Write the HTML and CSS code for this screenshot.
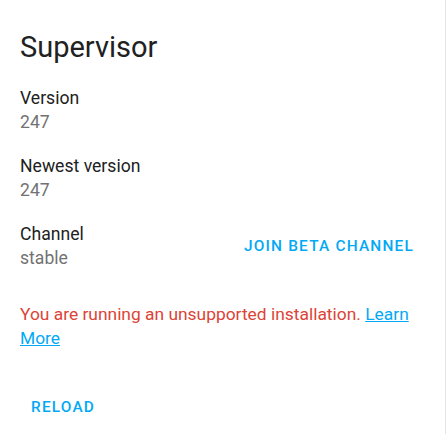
FILE: index.html
```html
<!DOCTYPE html>
<html>
<head>
<meta charset="utf-8">
<link rel="stylesheet" href="styles.css">
</head>
<body>
<div class="card">
  <h1 class="card-header">Supervisor</h1>
  <div class="card-content">
    <div class="row">
      <div class="info">
        <div class="label">Version</div>
        <div class="value">247</div>
      </div>
    </div>
    <div class="row">
      <div class="info">
        <div class="label">Newest version</div>
        <div class="value">247</div>
      </div>
    </div>
    <div class="row">
      <div class="info">
        <div class="label">Channel</div>
        <div class="value">stable</div>
      </div>
      <button class="btn">Join beta channel</button>
    </div>
    <div class="error">You are running an unsupported installation. <a href="#">Learn More</a></div>
  </div>
  <div class="card-actions">
    <button class="btn">Reload</button>
  </div>
</div>
</body>
</html>
```
FILE: styles.css
```css
html, body {
  margin: 0;
  padding: 0;
  background: #ffffff;
}
body {
  font-family: Roboto, "Noto Sans", sans-serif;
  color: #212121;
}
.card {
  width: 446px;
  height: 434px;
  box-sizing: border-box;
  border-right: 1px solid #e3e3e3;
  background: #fff;
}
.card-header {
  margin: 0;
  padding: 31px 20px 0;
  font-size: 29px;
  font-weight: 400;
  line-height: 32px;
  letter-spacing: 0;
}
.card-content {
  padding: 23px 20px 0;
}
.row {
  display: flex;
  align-items: center;
  justify-content: space-between;
  margin-bottom: 20px;
}
.label {
  font-size: 17.6px;
  line-height: 24px;
  color: #212121;
}
.value {
  font-size: 17.6px;
  line-height: 24px;
  color: #727272;
}
.btn {
  background: none;
  border: none;
  padding: 8px 12px;
  margin: 0;
  font-family: Roboto, sans-serif;
  font-size: 15.4px;
  font-weight: 500;
  letter-spacing: 1.2px;
  text-transform: uppercase;
  color: #03a9f4;
  line-height: 20px;
  cursor: pointer;
}
.row .btn {
  margin-right: -1px;
}
.error {
  margin-top: 32px;
  font-size: 17.4px;
  line-height: 24px;
  color: #db4437;
}
.error a {
  color: #03a9f4;
}
.card-actions {
  padding: 39px 0 0 19px;
}
```
